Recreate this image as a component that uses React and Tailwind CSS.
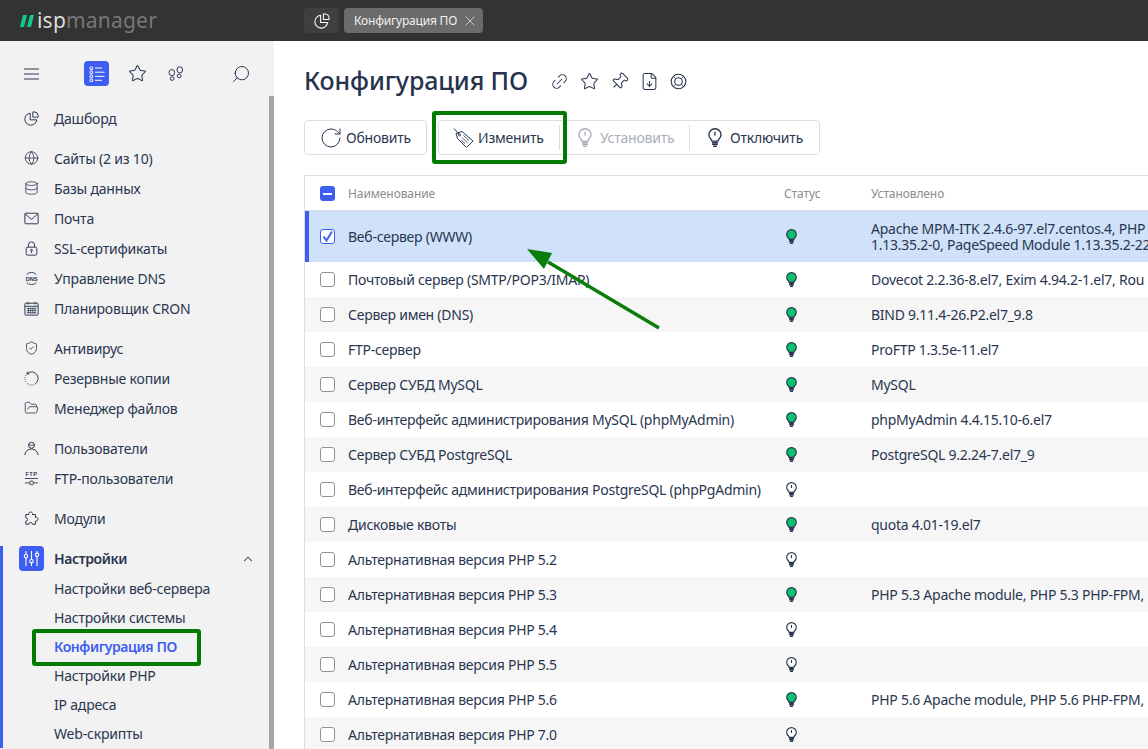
import {
  ChevronUp,
  Database,
  FileDown,
  FolderOpen,
  Globe,
  Link2,
  Pin,
  RotateCw,
  Search,
  ShieldCheck,
  Star,
  X,
} from "lucide-react";

const iconProps = { size: 18, strokeWidth: 1.3 };

function PieIcon({ size = 17 }) {
  return (
    <svg width={size} height={size} viewBox="0 0 17 17" fill="none" stroke="currentColor" strokeWidth="1.1">
      <path d="M7 2.5a6.8 6.8 0 1 0 7.5 7.5H7z" />
      <path d="M10 1h1.5a4.5 4.5 0 0 1 4.5 4.5V7h-6z" />
    </svg>
  );
}

function MenuIcon() {
  return (
    <svg width="15" height="12" viewBox="0 0 15 12" fill="none" stroke="currentColor" strokeWidth="1">
      <path d="M0 1h15M0 6h15M0 11h15" />
    </svg>
  );
}

function StepsIcon() {
  return (
    <svg width="16" height="16" viewBox="0 0 16 16" fill="none" stroke="currentColor" strokeWidth="1">
      <ellipse cx="3.8" cy="6.6" rx="2.8" ry="3.1" />
      <ellipse cx="4.2" cy="12.6" rx="2" ry="1.7" />
      <ellipse cx="11.8" cy="3.9" rx="2.8" ry="3.1" />
      <ellipse cx="11.2" cy="9.9" rx="2" ry="1.7" />
    </svg>
  );
}

function MailIcon() {
  return (
    <svg width="17" height="17" viewBox="0 0 17 17" fill="none" stroke="currentColor" strokeWidth="1.1">
      <rect x="1" y="2.5" width="15" height="12" rx="0.8" />
      <path d="M1.2 3.2L8.5 9.6L15.8 3.2" />
    </svg>
  );
}

function LockIcon() {
  return (
    <svg width="17" height="17" viewBox="0 0 17 17" fill="none" stroke="currentColor" strokeWidth="1.1">
      <rect x="2.5" y="7" width="12" height="9" rx="1.5" />
      <path d="M5 7V4.5a3.5 3.5 0 0 1 7 0V7" />
      <circle cx="8.5" cy="10.5" r="1" />
      <path d="M8.5 11.5V13.5" />
    </svg>
  );
}

function DnsIcon() {
  return (
    <svg width="17" height="17" viewBox="0 0 17 17" fill="none" stroke="currentColor" strokeWidth="1">
      <path d="M3 4a7.5 7.5 0 0 1 11 0M3 13a7.5 7.5 0 0 0 11 0" />
      <text x="8.5" y="10.8" textAnchor="middle" fontSize="6.5" fontWeight="700" fill="currentColor" stroke="none" fontFamily="Liberation Sans, sans-serif">DNS</text>
    </svg>
  );
}

function CalendarIcon() {
  return (
    <svg width="17" height="17" viewBox="0 0 17 17" fill="none" stroke="currentColor" strokeWidth="1.1">
      <rect x="1" y="2.5" width="15" height="13.5" rx="1" />
      <path d="M1 6h15M4.5 1v3M12.5 1v3" />
      <path d="M3 8.5h11M3 10.8h11M3 13.2h11M5 7.5v7M7.5 7.5v7M10 7.5v7M12.5 7.5v7" strokeWidth="0.8" />
    </svg>
  );
}

function BackupIcon() {
  return (
    <svg width="17" height="17" viewBox="0 0 17 17" fill="none" stroke="currentColor" strokeWidth="1.1">
      <path d="M4 2.5a7.3 7.3 0 1 1 9 12" />
      <path d="M13 14.5a7.3 7.3 0 0 1-11.5-4A7.3 7.3 0 0 1 4 2.5" strokeDasharray="1 1.4" />
      <path d="M3.5 0.8V3.4H6.2" />
    </svg>
  );
}

function UserIcon() {
  return (
    <svg width="17" height="17" viewBox="0 0 17 17" fill="none" stroke="currentColor" strokeWidth="1.1">
      <circle cx="8.5" cy="4.8" r="3.4" />
      <path d="M5.4 4.2c2 .9 4.2 .9 6.2 0" />
      <path d="M1 16a7.5 7 0 0 1 15 0" />
    </svg>
  );
}

function FtpIcon() {
  return (
    <svg width="17" height="17" viewBox="0 0 17 17" fill="none" stroke="currentColor" strokeWidth="1">
      <text x="8.5" y="6" textAnchor="middle" fontSize="6.5" fontWeight="700" letterSpacing="0.5" fill="currentColor" stroke="none" fontFamily="Liberation Sans, sans-serif">FTP</text>
      <path d="M1 8.5h15M1 13.5h5.5M10.5 13.5h5.5" />
      <rect x="6.5" y="11.5" width="4" height="4" rx="0.8" />
    </svg>
  );
}

function PuzzleIcon() {
  return (
    <svg width="17" height="17" viewBox="0 0 17 17" fill="none" stroke="currentColor" strokeWidth="1.1" strokeLinejoin="round">
      <path d="M2 4h3.4a2.2 2.2 0 1 1 4.2 0H13v3.2a2.2 2.2 0 1 1 0 4.2V15H9.6a2 2 0 0 0-4 0H2v-3.4a2 2 0 0 0 0-4z" />
    </svg>
  );
}

function ListIcon() {
  return (
    <svg width="16" height="16" viewBox="0 0 16 16" fill="none" stroke="white" strokeWidth="1">
      <rect x="1" y="1" width="2.6" height="2.6" rx="0.5" />
      <rect x="1" y="5" width="2.6" height="2.6" rx="0.5" />
      <rect x="1" y="9" width="2.6" height="2.6" rx="0.5" />
      <rect x="1" y="13" width="2.6" height="2.6" rx="0.5" />
      <path d="M6 2h7M6 6.2h9.5M6 10.3h9.5M6 14.3h7" />
    </svg>
  );
}

function SlidersIcon() {
  return (
    <svg width="17" height="17" viewBox="0 0 17 17" fill="none" stroke="white" strokeWidth="1.1">
      <path d="M3 1v3.5M3 8v8M8.5 1v8.5M8.5 13v3M14 1v2M14 6.5V16" />
      <circle cx="3" cy="6.2" r="1.7" />
      <circle cx="8.5" cy="11.2" r="1.7" />
      <circle cx="14" cy="4.8" r="1.7" />
    </svg>
  );
}

function TagIcon() {
  return (
    <svg width="21" height="21" viewBox="0 0 21 21" fill="none" stroke="currentColor" strokeWidth="1">
      <path d="M3 6.5L9 4.5L20 14L13.5 20.5L4.5 11.5z" />
      <circle cx="6.5" cy="7.8" r="1" />
      <path d="M6 7.2L1 1.5" />
      <path d="M10.5 8.5l5.5 5M9.2 10.8l5.3 5M8.2 13l4 3.8" strokeWidth="0.8" />
    </svg>
  );
}

function RingIcon() {
  return (
    <svg width="17" height="17" viewBox="0 0 17 17" fill="none" stroke="currentColor" strokeWidth="1.1">
      <circle cx="8.5" cy="8.5" r="7.3" />
      <circle cx="8.5" cy="8.5" r="3.8" />
      <path d="M3.4 3.4l2.4 2.4M13.6 3.4l-2.4 2.4M3.4 13.6l2.4-2.4M13.6 13.6l-2.4-2.4" strokeWidth="0.8" />
    </svg>
  );
}

function BulbIcon({ on, size = 15, color = "#2a3650" }) {
  return (
    <svg width={(size * 11) / 15} height={size} viewBox="0 0 11 15" fill="none" stroke={color} strokeWidth="1.1">
      <path
        d="M5.5 .6A4.8 4.8 0 0 0 .7 5.4c0 1.8 1 2.8 1.8 3.6.5.5.6 1 .6 1.4h4.8c0-.4.1-.9.6-1.4.8-.8 1.8-1.8 1.8-3.6A4.8 4.8 0 0 0 5.5 .6z"
        fill={on ? "#08c26e" : "#fff"}
      />
      <path d="M3.2 11.6h4.6M3.2 12.9h4.6M4 14.4h3" />
      {!on && <path d="M5.5 3v3" />}
    </svg>
  );
}

const navGroups = [
  [{ label: "Дашборд", icon: <PieIcon /> }],
  [
    { label: "Сайты (2 из 10)", icon: <Globe {...iconProps} /> },
    { label: "Базы данных", icon: <Database {...iconProps} /> },
    { label: "Почта", icon: <MailIcon /> },
    { label: "SSL-сертификаты", icon: <LockIcon /> },
    { label: "Управление DNS", icon: <DnsIcon /> },
    { label: "Планировщик CRON", icon: <CalendarIcon /> },
  ],
  [
    { label: "Антивирус", icon: <ShieldCheck {...iconProps} /> },
    { label: "Резервные копии", icon: <BackupIcon /> },
    { label: "Менеджер файлов", icon: <FolderOpen {...iconProps} /> },
  ],
  [
    { label: "Пользователи", icon: <UserIcon /> },
    { label: "FTP-пользователи", icon: <FtpIcon /> },
  ],
  [{ label: "Модули", icon: <PuzzleIcon /> }],
];

const subItems = [
  { label: "Настройки веб-сервера" },
  { label: "Настройки системы" },
  { label: "Конфигурация ПО", active: true },
  { label: "Настройки PHP" },
  { label: "IP адреса" },
  { label: "Web-скрипты" },
];

const rows = [
  { name: "Почтовый сервер (SMTP/POP3/IMAP)", on: true, info: "Dovecot 2.2.36-8.el7, Exim 4.94.2-1.el7, Rou" },
  { name: "Сервер имен (DNS)", on: true, info: "BIND 9.11.4-26.P2.el7_9.8" },
  { name: "FTP-сервер", on: true, info: "ProFTP 1.3.5e-11.el7" },
  { name: "Сервер СУБД MySQL", on: true, info: "MySQL" },
  { name: "Веб-интерфейс администрирования MySQL (phpMyAdmin)", on: true, info: "phpMyAdmin 4.4.15.10-6.el7" },
  { name: "Сервер СУБД PostgreSQL", on: true, info: "PostgreSQL 9.2.24-7.el7_9" },
  { name: "Веб-интерфейс администрирования PostgreSQL (phpPgAdmin)", on: false, info: "" },
  { name: "Дисковые квоты", on: true, info: "quota 4.01-19.el7" },
  { name: "Альтернативная версия PHP 5.2", on: false, info: "" },
  { name: "Альтернативная версия PHP 5.3", on: true, info: "PHP 5.3 Apache module, PHP 5.3 PHP-FPM," },
  { name: "Альтернативная версия PHP 5.4", on: false, info: "" },
  { name: "Альтернативная версия PHP 5.5", on: false, info: "" },
  { name: "Альтернативная версия PHP 5.6", on: true, info: "PHP 5.6 Apache module, PHP 5.6 PHP-FPM," },
  { name: "Альтернативная версия PHP 7.0", on: false, info: "" },
];

function Sidebar() {
  return (
    <aside className="relative w-[274px] shrink-0 bg-[#f2f2f2] text-[14px] tracking-[-0.2px] text-[#2a3650]">
      <div className="absolute right-0 top-[55px] bottom-0 w-[5px] bg-[#a6a6a6]" />

      {/* Top icons */}
      <div className="flex h-[62px] items-center pt-[3px] pl-[24px]">
        <MenuIcon />
        <div className="ml-[45px] flex h-[25px] w-[25px] items-center justify-center rounded-[4px] bg-[#3d5ef0]">
          <ListIcon />
        </div>
        <div className="ml-[19px]">
          <Star size={19} strokeWidth={1.3} />
        </div>
        <div className="ml-[21px]">
          <StepsIcon />
        </div>
        <div className="ml-[47px] -scale-x-100">
          <Search size={20} strokeWidth={1.2} />
        </div>
      </div>

      <nav>
        {navGroups.map((group, i) => (
          <div key={i} className="mb-[10px]">
            {group.map((item) => (
              <div key={item.label} className="flex h-[30px] items-center pl-[24px]">
                <span className="mr-[15px] flex w-[15px] shrink-0 justify-center">{item.icon}</span>
                <span>{item.label}</span>
              </div>
            ))}
          </div>
        ))}

        {/* Settings */}
        <div className="mt-[13px] border-l-[3px] border-[#3d5ef0] pl-[16px]">
          <div className="flex h-[25px] items-center">
            <div className="flex h-[25px] w-[25px] items-center justify-center rounded-[4px] bg-[#3d5ef0]">
              <SlidersIcon />
            </div>
            <span className="ml-[10px] w-[187px] font-semibold tracking-[-0.4px]">Настройки</span>
            <ChevronUp size={14} strokeWidth={1.8} />
          </div>
          <div className="mt-[3px] pl-[35px]">
            {subItems.map((item) => (
              <div
                key={item.label}
                className={`flex h-[29px] items-center ${item.active ? "font-semibold tracking-[-0.4px] text-[#3d5ef0]" : ""}`}
              >
                {item.label}
              </div>
            ))}
          </div>
        </div>
      </nav>
    </aside>
  );
}

function Toolbar() {
  return (
    <div className="mt-[23px] flex text-[14px] tracking-[-0.2px] text-[#2a3650]">
      <div className="flex h-[35px] w-[123px] items-center rounded-[4px] border border-[#dcdcdc] pl-[14px]">
        <RotateCw size={24} strokeWidth={1} />
        <span className="ml-[3px]">Обновить</span>
      </div>
      <div className="ml-[11px] flex h-[35px] w-[382px] items-center rounded-[4px] border border-[#dcdcdc]">
        <div className="flex h-[25px] w-[121px] items-center border-r border-[#dcdcdc] pl-[14px]">
          <TagIcon />
          <span className="ml-[4px]">Изменить</span>
        </div>
        <div className="flex h-[25px] w-[130px] items-center border-r border-[#dcdcdc] pl-[18px] text-[#a9afba]">
          <BulbIcon on={false} size={19} color="#a9afba" />
          <span className="ml-[8px]">Установить</span>
        </div>
        <div className="flex h-[25px] items-center pl-[18px]">
          <BulbIcon on={false} size={19} />
          <span className="ml-[8px]">Отключить</span>
        </div>
      </div>
    </div>
  );
}

function CheckBox({ checked }) {
  return (
    <span
      className={`flex h-[15px] w-[15px] shrink-0 items-center justify-center rounded-[3px] border bg-white ${
        checked ? "border-[#3d5ef0]" : "border-[#939393]"
      }`}
    >
      {checked && (
        <svg width="13" height="13" viewBox="0 0 13 13" fill="none" stroke="#3d5ef0" strokeWidth="2">
          <path d="M2.5 6.5L5.5 10.5L11 1.5" />
        </svg>
      )}
    </span>
  );
}

function Table() {
  return (
    <div className="mt-[20px] border-l border-t border-[#dedede] text-[14px] tracking-[-0.25px] text-[#2a3650]">
      {/* Header */}
      <div className="flex h-[35px] items-center border-b border-[#dedede] pt-px text-[12px] tracking-[-0.1px] text-[#8c8c8c]">
        <span className="ml-[15px] flex h-[15px] w-[15px] items-center justify-center rounded-[3px] bg-[#3d5ef0]">
          <span className="h-[2px] w-[9px] bg-white" />
        </span>
        <span className="ml-[13px] w-[436px]">Наименование</span>
        <span className="w-[87px]">Статус</span>
        <span>Установлено</span>
      </div>

      {/* Selected row */}
      <div className="flex h-[51px] items-center border-l-4 border-[#3d5ef0] bg-[#cfe2f9]">
        <span className="ml-[11px]">
          <CheckBox checked />
        </span>
        <span className="ml-[13px] w-[436px]">Веб-сервер (WWW)</span>
        <span className="flex w-[87px] pl-[2px]">
          <BulbIcon on />
        </span>
        <div className="min-w-0 flex-1 overflow-hidden whitespace-nowrap leading-[16px]">
          <div>Apache MPM-ITK 2.4.6-97.el7.centos.4, PHP</div>
          <div>1.13.35.2-0, PageSpeed Module 1.13.35.2-22</div>
        </div>
      </div>

      {rows.map((row) => (
        <div key={row.name} className="flex h-[35px] items-center odd:bg-white even:bg-[#f6f6f6]">
          <span className="ml-[15px]">
            <CheckBox />
          </span>
          <span className="ml-[13px] w-[436px] whitespace-nowrap">{row.name}</span>
          <span className="flex w-[87px] pl-[2px]">
            <BulbIcon on={row.on} />
          </span>
          <span className="min-w-0 flex-1 overflow-hidden whitespace-nowrap">{row.info}</span>
        </div>
      ))}
    </div>
  );
}

export default function App() {
  return (
    <div className="relative flex h-[749px] w-[1148px] flex-col overflow-hidden bg-white font-['Noto_Sans',sans-serif]">
      {/* Top bar */}
      <header className="flex h-[41px] shrink-0 items-center bg-[#333333]">
        <div className="ml-[20px] flex w-[284px] items-center">
          <svg width="14" height="12" viewBox="0 0 14 12" fill="#10c98f">
            <path d="M3 0h4L4 12H0zM10 0h4l-3 12H7z" />
          </svg>
          <span className="ml-[3px] text-[21px] leading-none tracking-[0.2px]">
            <span className="text-[#dddddd]">isp</span>
            <span className="text-[#777777]">manager</span>
          </span>
        </div>
        <div className="flex h-[25px] w-[35px] items-center justify-center rounded-[4px] bg-[#3f3f3f] text-white">
          <PieIcon size={16} />
        </div>
        <div className="ml-[5px] flex h-[25px] w-[139px] items-center rounded-[4px] bg-[#6b6b6b] pl-[10px] text-[12px] tracking-[-0.2px] text-[#f0f0f0]">
          Конфигурация ПО
          <X size={16} strokeWidth={1.3} className="ml-[5px] text-[#d8d8d8]" />
        </div>
      </header>

      <div className="flex min-h-0 flex-1">
        <Sidebar />

        <main className="min-w-0 flex-1 pl-[30px] pt-[24px]">
          <div className="flex h-[32px] items-center text-[#2a3650]">
            <h1 className="text-[25px] font-medium tracking-[-0.1px] text-[#27324d]">Конфигурация ПО</h1>
            <div className="ml-[22px] flex items-center gap-[11px]">
              <Link2 size={19} strokeWidth={1.3} className="-rotate-45" />
              <Star size={19} strokeWidth={1.3} />
              <Pin size={19} strokeWidth={1.3} className="rotate-45" />
              <FileDown size={19} strokeWidth={1.3} />
              <RingIcon />
            </div>
          </div>
          <Toolbar />
          <Table />
        </main>
      </div>

      {/* Annotations drawn over the screenshot */}
      <div className="absolute left-[432px] top-[111px] h-[53px] w-[135px] rounded-[3px] border-4 border-[#007a00]" />
      <div className="absolute left-[32px] top-[629px] h-[37px] w-[169px] rounded-[3px] border-4 border-[#007a00]" />
      <svg className="absolute left-[520px] top-[240px]" width="150" height="100" viewBox="520 240 150 100">
        <path d="M548 262L659 328" stroke="#0a7d0a" strokeWidth="3.5" />
        <path d="M527 249L552 253L544 269z" fill="#0a7d0a" />
      </svg>
    </div>
  );
}
